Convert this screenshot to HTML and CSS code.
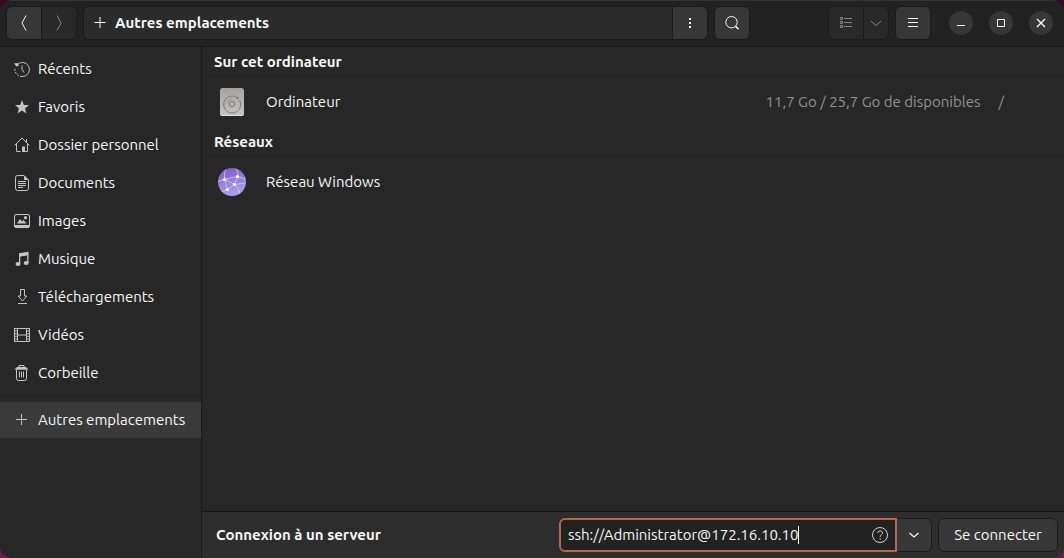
FILE: index.html
```html
<!DOCTYPE html>
<html lang="fr">
<head>
<meta charset="utf-8">
<meta name="viewport" content="width=device-width, initial-scale=1">
<title>Autres emplacements</title>
<link rel="stylesheet" href="styles.css">
</head>
<body>
<div class="window">
  <header class="headerbar">
    <div class="linked nav">
      <button class="btn" type="button" aria-label="Précédent"><svg class="icon" viewBox="0 0 16 16"><path d="M10 .500 6 8l4 7.500"/></svg></button>
      <button class="btn flat" type="button" aria-label="Suivant" disabled><svg class="icon" viewBox="0 0 16 16"><path d="M6 .500 10 8l-4 7.500"/></svg></button>
    </div>
    <div class="linked path">
      <button class="btn location" type="button"><svg class="icon" viewBox="0 0 16 16"><path d="M2.500 7.500h11M8 2v11"/></svg><span>Autres emplacements</span></button>
      <button class="btn more" type="button" aria-label="Options"><svg class="icon solid" viewBox="0 0 16 16"><path d="M7 3h2v2H7zM7 7h2v2H7zM7 11h2v2H7z"/></svg></button>
    </div>
    <button class="btn single" type="button" aria-label="Rechercher"><svg class="icon" viewBox="0 0 16 16"><circle cx="7.500" cy="7.200" r="5.700"/><path d="m11.500 11.200 3 3" stroke-width="1.600"/></svg></button>
    <div class="linked view">
      <button class="btn flat" type="button" aria-label="Vue en liste" disabled><svg class="icon" viewBox="0 0 16 16"><path d="M2.500 2.500h2v2h-2zM2.500 6.500h2v2h-2zM2.500 10.500h2v2h-2zM6 3.500h8M6 7.500h8M6 11.500h8"/></svg></button>
      <button class="btn flat narrow" type="button" aria-label="Options d’affichage" disabled><svg class="icon" viewBox="0 0 16 16"><path d="m3 6 5 4.500L13 6"/></svg></button>
    </div>
    <button class="btn single" type="button" aria-label="Menu"><svg class="icon" viewBox="0 0 16 16"><path d="M3 3.500h10M3 7.500h10M3 11.500h10"/></svg></button>
    <div class="controls">
      <button class="round" type="button" aria-label="Réduire"><svg class="icon" viewBox="0 0 16 16"><path d="M4 10.500h8"/></svg></button>
      <button class="round" type="button" aria-label="Agrandir"><svg class="icon" viewBox="0 0 16 16"><path d="M4.500 4.500h7v7h-7z"/></svg></button>
      <button class="round" type="button" aria-label="Fermer"><svg class="icon" viewBox="0 0 16 16"><path d="m4 4 8 8M12 4l-8 8" stroke-width="1.400"/></svg></button>
    </div>
  </header>
  <div class="content">
    <nav class="sidebar" aria-label="Emplacements">
      <a class="place" href="#"><svg class="icon" viewBox="0 0 16 16"><path d="M3 4A7 7 0 1 1 8 15.500"/><path d="M8 15.500A7 7 0 0 1 1.200 6.500" stroke-dasharray="2 1.200"/><path d="M8 4.500V8.500l2 3"/><path class="fill" d="M0 2.500 2.500 5.500 5 4.500 3.500 2z"/></svg>Récents</a>
      <a class="place" href="#"><svg class="icon solid" viewBox="0 0 16 16"><path d="m8 1 1.900 4.900 5.100.2-4 3.300 1.400 5L8 11.600l-4.400 2.800 1.400-5-4-3.300 5.100-.2z"/></svg>Favoris</a>
      <a class="place" href="#"><svg class="icon" viewBox="0 0 16 16"><path d="M.5 8.500 8 1l7.500 7.500M2.500 7v7.500h4M13.500 7v7.500h-4M12.500 2v3"/><path class="fill" d="M8 9.500h3V15H8z"/></svg>Dossier personnel</a>
      <a class="place" href="#"><svg class="icon" viewBox="0 0 16 16"><path d="M3.500.5H10L14.500 5v8.500a2 2 0 0 1-2 2h-9a2 2 0 0 1-2-2v-11a2 2 0 0 1 2-2zM4 6.500h8M4 8.500h8M4 10.500h8M4 12.500h5"/><path class="fill" d="M10 .5V5h4.500z"/></svg>Documents</a>
      <a class="place" href="#"><svg class="icon" viewBox="0 0 16 16"><rect x=".5" y="1.500" width="15" height="13" rx="1.500"/><path class="fill" d="M1 12h14v2.500H1zM3 10.500 6 6l2 2.500L9.500 7l3 3.500z"/><circle class="fill" cx="11.500" cy="4.700" r="1.600"/></svg>Images</a>
      <a class="place" href="#"><svg class="icon solid" viewBox="0 0 16 16"><path d="M5 2.300 14.500.8V12h-1.300V4.500L6.300 5.500V13H5z"/><ellipse cx="4" cy="13" rx="2.500" ry="2"/><ellipse cx="12.200" cy="12" rx="2.500" ry="2"/></svg>Musique</a>
      <a class="place" href="#"><svg class="icon" viewBox="0 0 16 16"><path d="M6.500.500h4v6.500h2.300L8.500 12 4.200 7h2.300zM4 14.500h9"/></svg>Téléchargements</a>
      <a class="place" href="#"><svg class="icon" viewBox="0 0 16 16"><path d="M3.500 1.500h9v13h-9zM3.500 8h9M.500 1v14M15.500 1v14"/><path d="M2 1v14M14 1v14" stroke-width="2" stroke-dasharray="1 1.600"/></svg>Vidéos</a>
      <a class="place" href="#"><svg class="icon" viewBox="0 0 16 16"><path d="M2.500 5v8.500a2 2 0 0 0 2 2h6a2 2 0 0 0 2-2V5M5.500 6.500v6M7.500 6.500v6M9.500 6.500v6M5 2.500v-2h5v2"/><path class="fill" d="M3 2h9l2 2v.800H1V4z"/></svg>Corbeille</a>
      <hr class="rule">
      <a class="place active" href="#" aria-current="page"><svg class="icon" viewBox="0 0 16 16"><path d="M2 7.500h11M7.500 2v11"/></svg>Autres emplacements</a>
    </nav>
    <main class="main">
      <div class="locations">
        <section>
          <h2 class="heading">Sur cet ordinateur</h2>
          <a class="row" href="#">
            <svg class="device" viewBox="0 0 32 32"><defs><linearGradient id="metal" x2="0" y2="1"><stop stop-color="#a3a2a1"/><stop offset="1" stop-color="#c6c5c4"/></linearGradient></defs><rect x="4" y="2" width="24" height="28" rx="2.500" fill="url(#metal)"/><path d="M4.500 28.500q.5 1 2 1h19q1.500 0 2-1" fill="none" stroke="#e2e1e0"/><g fill="none" stroke="#7b7a79"><path d="M20.500 11.200a8.500 8.500 0 1 0 3 3"/><circle cx="16" cy="18" r="2.800"/><path d="M10.700 18a5.300 5.300 0 0 1 5.300-5.300" opacity=".5"/></g><circle cx="21.500" cy="12" r="1" fill="#6b6a69"/></svg>
            <span class="name">Ordinateur</span>
            <span class="detail">11,7 Go / 25,7 Go de disponibles</span>
            <span class="mount">/</span>
          </a>
        </section>
        <section>
          <h2 class="heading">Réseaux</h2>
          <a class="row" href="#">
            <svg class="device" viewBox="0 0 32 32"><defs><linearGradient id="globe" x2=".3" y2="1"><stop stop-color="#7f55c4"/><stop offset="1" stop-color="#a6a0ea"/></linearGradient><clipPath id="disc"><circle cx="16" cy="16" r="14"/></clipPath></defs><circle cx="16" cy="16" r="14" fill="url(#globe)"/><g clip-path="url(#disc)"><path d="M8.500 13.500Q8 8 10 2M8.500 13.500 1 16M8.500 13.500l10 5 3-8M8.500 13.500l3 10 7-5 11.500-1.500M21.500 10.500Q14 12 8.500 13.500M21.500 10.500Q23 7 20 2M21.500 10.500l9 3M11.500 23.500 5 26M18.500 18.500Q24 23 24 29" fill="none" stroke="#d9c9f6" stroke-width=".8"/><g fill="#fff"><circle cx="8.500" cy="13.500" r="1.600"/><circle cx="21.500" cy="10.500" r="1.600"/><circle cx="18.500" cy="18.500" r="1.600"/><circle cx="11.500" cy="23.500" r="1.600"/></g></g></svg>
            <span class="name">Réseau Windows</span>
          </a>
        </section>
      </div>
      <form class="connect">
        <label class="connect-label" for="server">Connexion à un serveur</label>
        <div class="linked entry">
          <div class="field">
            <input class="address" id="server" type="text" value="ssh://Administrator@172.16.10.10" spellcheck="false" autocomplete="off">
            <span class="caret"></span>
            <button class="help" type="button" aria-label="Aide"><svg class="icon" viewBox="0 0 16 16"><circle cx="8" cy="8" r="7.500"/><path d="M5.700 6.200C5.700 3 10.500 3.200 10.500 6c0 1.800-2.300 1.900-2.300 3.800M8.200 11.300v1.400"/></svg></button>
          </div>
          <button class="btn drop" type="button" aria-label="Serveurs récents"><svg class="icon" viewBox="0 0 16 16"><path d="m3.500 6 4.500 4 4.500-4" stroke-width="1.300"/></svg></button>
        </div>
        <button class="btn submit" type="button">Se connecter</button>
      </form>
    </main>
  </div>
</div>
</body>
</html>
```
FILE: styles.css
```css
* { box-sizing: border-box; }

body {
  margin: 0;
  background: linear-gradient(#3a0626, #6f1c4b);
  color: #f7f7f7;
  font: 15px/20px Ubuntu, "Noto Sans", sans-serif;
}

button, input { font: inherit; color: inherit; }
a { color: inherit; text-decoration: none; }

.window {
  display: flex;
  flex-direction: column;
  min-height: 100vh;
  overflow: hidden;
  border-radius: 12px;
  background: #272727;
}

.icon {
  flex: none;
  width: 16px;
  height: 16px;
  fill: none;
  stroke: currentColor;
}
.icon.solid, .icon .fill { fill: currentColor; stroke: none; }

.headerbar {
  display: flex;
  align-items: center;
  gap: 6px;
  padding: 6px 11px 6px 6px;
  border-bottom: 1px solid #161616;
  background: #222;
  box-shadow: inset 0 1px #343434;
}

.btn {
  display: flex;
  align-items: center;
  justify-content: center;
  height: 34px;
  padding: 0;
  border: 1px solid #1b1b1b;
  border-radius: 6px;
  background: #373737;
}
.btn.flat { background: #292929; color: #858585; }
.single { width: 36px; }

.linked { display: flex; }
.linked > :not(:last-child) { border-top-right-radius: 0; border-bottom-right-radius: 0; }
.linked > :not(:first-child) { border-left: 0; border-top-left-radius: 0; border-bottom-left-radius: 0; }
.nav .btn { width: 36px; }
.nav .btn:last-child { width: 35px; }
.path { flex: 1; }
.location {
  flex: 1;
  justify-content: flex-start;
  gap: 7px;
  padding: 0 8px;
  background: #2b2b2b;
  font-weight: 700;
}
.more { width: 35px; }
.view { margin-left: 72px; }
.view .btn { width: 36px; }
.view .narrow { width: 25px; }

.controls { display: flex; gap: 16px; margin-left: 12px; }
.round {
  display: flex;
  align-items: center;
  justify-content: center;
  width: 24px;
  height: 24px;
  padding: 0;
  border: 0;
  border-radius: 50%;
  background: #373737;
}

.content { display: flex; flex: 1; }

.sidebar {
  flex: none;
  width: 202px;
  padding-top: 3px;
  border-right: 1px solid #1a1a1a;
}
.place {
  display: flex;
  align-items: center;
  gap: 8px;
  height: 38px;
  padding: 0 14px;
  white-space: nowrap;
}
.place .icon { color: #c4c4c4; }
.place.active { height: 36px; background: #3a3a3a; }
.rule { height: 1px; margin: 4px 0 5px; border: 0; background: #222; }

.main { display: flex; flex: 1; flex-direction: column; min-width: 0; }
.locations { flex: 1; }
.heading {
  margin: 0;
  padding: 5px 12px 4px;
  border-bottom: 1px solid #242424;
  font-size: 15px;
  font-weight: 700;
}
.row {
  display: flex;
  align-items: center;
  height: 50px;
  padding: 0 60px 0 14px;
}
.device { width: 32px; height: 32px; margin-right: 18px; }
.name { flex: 1; }
.detail, .mount { color: #929292; }
.mount { margin-left: 18px; }

.connect {
  display: flex;
  align-items: center;
  padding: 6px;
  border-top: 1px solid #171717;
  background: #2d2d2d;
}
.connect-label { flex: 1; padding-left: 8px; font-weight: 700; }
.entry { width: 373px; margin-right: 6px; }
.field {
  display: flex;
  flex: 1;
  align-items: center;
  height: 34px;
  padding: 0 7px;
  border: 2px solid #b4684a;
  border-radius: 6px;
  background: #222;
}
.address {
  field-sizing: content;
  min-width: 0;
  padding: 0;
  border: 0;
  outline: 0;
  background: none;
  caret-color: transparent;
}
.caret { width: 1px; height: 18px; background: #fff; }
.help {
  display: flex;
  margin-left: auto;
  padding: 0;
  border: 0;
  background: none;
  color: #cfcfcf;
}
.drop { width: 35px; }
.submit { width: 120px; }
```
